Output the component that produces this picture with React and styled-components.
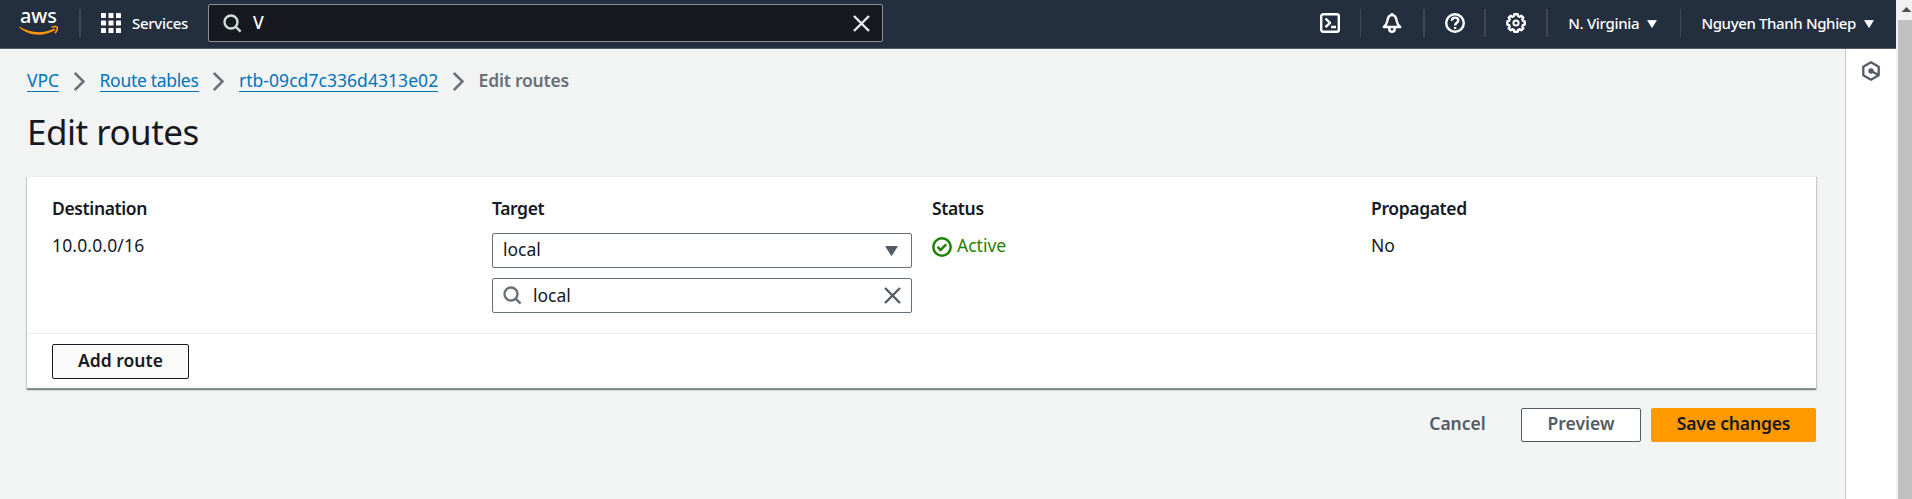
import React from "react";
import styled, { createGlobalStyle } from "styled-components";

const GlobalStyle = createGlobalStyle`
  * { box-sizing: border-box; }
  body {
    margin: 0;
    overflow: hidden;
    background: #f2f3f3;
    color: #16191f;
    font-family: "Noto Sans", sans-serif;
    font-size: 17.5px;
    line-height: 27px;
  }
  svg { display: block; flex: none; }
`;

const Screen = styled.div`
  display: flex;
  height: 499px;
`;

const Console = styled.div`
  flex: 1;
  min-width: 0;
  display: flex;
  flex-direction: column;
`;

/* ---------- top navigation ---------- */

const TopBar = styled.header`
  display: flex;
  align-items: flex-start;
  height: 49px;
  padding: 0 22px 0 19px;
  background: #232f3e;
  border-bottom: 1px solid #545b64;
  color: #fff;
  font-size: 15px;
  font-weight: 500;
  white-space: nowrap;
`;

const Logo = styled.div`
  width: 60px;
`;

const Separator = styled.i`
  width: ${(p) => p.$thickness || 2}px;
  height: 28px;
  margin-top: 9px;
  background: #414750;
`;

const ServicesButton = styled.div`
  display: flex;
  align-items: center;
  gap: 11px;
  width: 127px;
  height: 46px;
  padding-left: 20px;
  letter-spacing: -0.3px;

  span { padding-top: 1px; }
`;

const SearchBox = styled.div`
  display: flex;
  align-items: center;
  width: 675px;
  height: 38px;
  margin-top: 4px;
  padding: 0 12px 0 14px;
  background: #16191f;
  border: 1px solid #879596;
  border-radius: 2px;
  font-size: 17.5px;

  span { flex: 1; margin-left: 11px; padding-bottom: 1px; }
`;

const Tools = styled.div`
  display: flex;
  margin-left: auto;
`;

const Tool = styled.div`
  display: flex;
  justify-content: center;
  align-items: center;
  width: ${(p) => p.$width}px;
  height: 46px;
`;

const Menu = styled.div`
  display: flex;
  align-items: center;
  gap: ${(p) => p.$gap}px;
  height: 46px;
  padding: 1px ${(p) => p.$after || 0}px 0 20px;
  letter-spacing: ${(p) => p.$tracking}px;
`;

/* ---------- page ---------- */

const Body = styled.div`
  flex: 1;
  display: flex;
`;

const Main = styled.main`
  flex: 1;
  padding: 18px 29px 0 27px;
`;

const SidePanel = styled.aside`
  display: flex;
  justify-content: center;
  width: 51px;
  padding-top: 12px;
  background: #fff;
  border-left: 1px solid #c3c8c9;
`;

const Breadcrumbs = styled.nav`
  display: flex;
  align-items: flex-start;
  height: 27px;
  gap: 14.7px;

  svg { margin-top: 5px; }
`;

const Crumb = styled.a`
  height: 25px;
  color: #0073bb;
  border-bottom: 1px solid #0073bb;
  letter-spacing: ${(p) => p.$tracking || 0}px;
`;

const CurrentCrumb = styled.span`
  color: #687078;
  font-weight: 600;
  letter-spacing: -0.2px;
`;

const Title = styled.h1`
  margin: 15px 0 22px;
  font-size: 35px;
  font-weight: 400;
  line-height: 45px;
  letter-spacing: -0.52px;
`;

const Card = styled.section`
  background: #fff;
  height: 213px;
  border-top: 1px solid #eaeded;
  box-shadow: 0 1px 1px rgba(0, 28, 36, 0.3), 1px 1px 1px rgba(0, 28, 36, 0.15),
    -1px 1px 1px rgba(0, 28, 36, 0.15);
  border-bottom: 1px solid #879596;
`;

const Routes = styled.div`
  display: grid;
  grid-template-columns: 440px 440px 439px 1fr;
  height: 157px;
  padding: 18px 0 0 25px;
  border-bottom: 1px solid #eaeded;
`;

const Column = styled.div`
  display: flex;
  flex-direction: column;
  align-items: flex-start;
`;

const Label = styled.div`
  margin-bottom: 10px;
  font-weight: 600;
  letter-spacing: -0.37px;
`;

const Value = styled.div`
  display: flex;
  gap: 5px;
  color: ${(p) => (p.$success ? "#1d8102" : "inherit")};
  letter-spacing: ${(p) => p.$tracking || 0}px;

  svg { margin-top: 5px; }
`;

const Field = styled.div`
  display: flex;
  align-items: center;
  width: 420px;
  height: 35px;
  margin: 1px 0 9px;
  padding: 0 ${(p) => (p.$select ? 13 : 10)}px 0 10px;
  background: #fff;
  border: 1px solid #687078;
  border-radius: 2px;

  span { flex: 1; padding-bottom: ${(p) => (p.$select ? 2 : 0)}px; }
  svg + span { margin-left: 11px; }
`;

const CardFooter = styled.div`
  padding: 10px 25px;
`;

const Button = styled.button`
  display: inline-flex;
  justify-content: center;
  align-items: center;
  width: ${(p) => p.$width}px;
  height: ${(p) => p.$height || 34}px;
  padding: 0 0 3px;
  border: 1px solid ${(p) => p.$border || "transparent"};
  border-radius: 2px;
  background: ${(p) => p.$fill || "transparent"};
  color: ${(p) => p.$color || "#16191f"};
  font: 600 17.5px/27px "Noto Sans", sans-serif;
  letter-spacing: ${(p) => p.$tracking || 0}px;
`;

const Actions = styled.div`
  display: flex;
  justify-content: flex-end;
  gap: 10px;
  margin-top: 19px;
`;

/* ---------- scrollbar ---------- */

const Scrollbar = styled.div`
  width: 16px;
  padding: 7px 0 0 2px;
  background: #f1f1f1;
`;

const Thumb = styled.div`
  height: 479px;
  margin-top: 8px;
  background: #c1c1c1;
`;

/* ---------- drawings ---------- */

const AwsLogo = () => (
  <svg width="40" height="40" viewBox="0 -7 40 40">
    <text x="1" y="15.8" fill="#fff" fontFamily="Noto Sans, sans-serif" fontSize="20.5" fontWeight="500" textLength="37" lengthAdjust="spacingAndGlyphs">aws</text>
    <path d="M.3 19.5c10.800 6.800 23.700 7.600 35.200 2.100l.8 1.400C24.500 30.200 9.500 29.200.1 20.300Z" fill="#f90" />
    <path d="M32.500 20.200c2.200-.7 4.600-.9 5.800-.1.2 2.100-.5 4.400-2.300 6" fill="none" stroke="#f90" strokeWidth="1.500" />
  </svg>
);

const GridIcon = () => (
  <svg width="20" height="20" fill="#fff">
    {[0, 7.5, 15].map((y) => [0, 7.5, 15].map((x) => <rect key={`${x}-${y}`} x={x} y={y} width="5" height="5" rx="0.6" />))}
  </svg>
);

const SearchIcon = ({ color }) => (
  <svg width="19" height="19" viewBox="0 0 19 19" fill="none" stroke={color} strokeWidth="2.400">
    <circle cx="8" cy="8" r="6.500" />
    <path d="m12.600 12.600 5 5" />
  </svg>
);

const CloseIcon = ({ color }) => (
  <svg width="17" height="17" viewBox="0 0 17 17" stroke={color} strokeWidth="2.400">
    <path d="m1 1 15 15M16 1 1 16" />
  </svg>
);

const Triangle = ({ width, height, color }) => (
  <svg width={width} height={height} viewBox="0 0 13 10">
    <path d="M.8.500h11.400L6.500 9.500Z" fill={color} stroke={color} strokeLinejoin="round" />
  </svg>
);

const Chevron = () => (
  <svg width="11" height="19" viewBox="0 0 11 19" fill="none" stroke="#687078" strokeWidth="2.600">
    <path d="m.8 1 8.700 8.500L.8 18" />
  </svg>
);

const toolStroke = { fill: "none", stroke: "#fff", strokeWidth: 2.4, strokeLinejoin: "round" };

const TerminalIcon = () => (
  <svg width="20" height="20" {...toolStroke}>
    <rect x="1.200" y="1.200" width="17.600" height="17.600" rx="2" />
    <path d="m5.500 5.500 4.500 4.300-4.500 4.400M11 14h5" />
  </svg>
);

const BellIcon = () => (
  <svg width="20" height="20" {...toolStroke}>
    <path d="M1.800 14h16.400c-2.300-1.800-3-3.300-3.500-6C14.200 4.700 13 2 10 2S5.800 4.700 5.300 8c-.5 2.700-1.200 4.200-3.500 6ZM10 2V0M7.300 14.500v1.700c0 1.500 1.100 2.600 2.700 2.600s2.700-1.100 2.700-2.600v-1.700" />
  </svg>
);

const HelpIcon = () => (
  <svg width="20" height="20" {...toolStroke}>
    <circle cx="10" cy="10" r="8.800" />
    <path d="M6.900 7.700c0-1.900 1.200-3.100 3.200-3.100s3.200 1.100 3.200 2.800c0 2.300-3.200 2.400-3.200 5M10.100 13.900v2" />
  </svg>
);

const GearIcon = () => (
  <svg width="20" height="20" {...toolStroke}>
    <path d="M8.300 1.300h3.400l.5 1.900 1.500.6 1.700-1 1.900 1.900-1 1.700.6 1.500 1.800.5v3.200l-1.800.5-.6 1.500 1 1.700-1.900 1.900-1.700-1-1.500.6-.5 1.900H8.300l-.5-1.900-1.500-.6-1.700 1-1.900-1.900 1-1.700-.6-1.500-1.800-.5V8.400l1.800-.5.600-1.500-1-1.700 1.900-1.900 1.700 1 1.500-.6Z" />
    <circle cx="10" cy="10" r="2.600" strokeWidth="2" />
  </svg>
);

const CheckIcon = () => (
  <svg width="20" height="20" fill="none" stroke="#1d8102" strokeWidth="2.500">
    <circle cx="10" cy="10" r="8.700" />
    <path d="m5.600 9.800 3 3.200 5.600-5.600" />
  </svg>
);

const HexagonIcon = () => (
  <svg width="18" height="20" fill="none" stroke="#545b64" strokeWidth="2.300" strokeLinejoin="round">
    <path d="m9 1.300 7.700 4.400v8.600L9 18.700l-7.700-4.400V5.700Z" />
    <path d="m9 10 7.500 4" />
    <circle cx="9" cy="10" r="2.700" fill="#545b64" stroke="none" />
  </svg>
);

const ScrollArrow = () => (
  <svg width="14" height="5" viewBox="0 0 14 5">
    <path d="M3.500 5h10L8.500 0Z" fill="#505050" />
  </svg>
);

export default function App() {
  return (
    <Screen>
      <GlobalStyle />
      <Console>
        <TopBar>
          <Logo><AwsLogo /></Logo>
          <Separator />
          <ServicesButton><GridIcon /><span>Services</span></ServicesButton>
          <SearchBox>
            <SearchIcon color="#d5dbdb" />
            <span>V</span>
            <CloseIcon color="#eaeded" />
          </SearchBox>
          <Tools>
            <Tool $width={60}><TerminalIcon /></Tool>
            <Separator $thickness={1} />
            <Tool $width={62}><BellIcon /></Tool>
            <Separator />
            <Tool $width={59}><HelpIcon /></Tool>
            <Separator />
            <Tool $width={60}><GearIcon /></Tool>
            <Separator />
            <Menu $gap={8} $after={23} $tracking={-0.3}>N. Virginia<Triangle width="10" height="8" color="#fff" /></Menu>
            <Separator $thickness={1} />
            <Menu $gap={8} $tracking={-0.37}>Nguyen Thanh Nghiep<Triangle width="10" height="8" color="#fff" /></Menu>
          </Tools>
        </TopBar>
        <Body>
          <Main>
            <Breadcrumbs>
              <Crumb>VPC</Crumb>
              <Chevron />
              <Crumb $tracking={-0.31}>Route tables</Crumb>
              <Chevron />
              <Crumb $tracking={0.05}>rtb-09cd7c336d4313e02</Crumb>
              <Chevron />
              <CurrentCrumb>Edit routes</CurrentCrumb>
            </Breadcrumbs>
            <Title>Edit routes</Title>
            <Card>
              <Routes>
                <Column>
                  <Label>Destination</Label>
                  <Value $tracking={0.15}>10.0.0.0/16</Value>
                </Column>
                <Column>
                  <Label>Target</Label>
                  <Field $select><span>local</span><Triangle width="13" height="10" color="#545b64" /></Field>
                  <Field><SearchIcon color="#687078" /><span>local</span><CloseIcon color="#545b64" /></Field>
                </Column>
                <Column>
                  <Label>Status</Label>
                  <Value $success><CheckIcon />Active</Value>
                </Column>
                <Column>
                  <Label>Propagated</Label>
                  <Value>No</Value>
                </Column>
              </Routes>
              <CardFooter>
                <Button $width={137} $height={35} $border="#16191f" $fill="#fafafa">Add route</Button>
              </CardFooter>
            </Card>
            <Actions>
              <Button $width={107} $color="#545b64">Cancel</Button>
              <Button $width={120} $border="#545b64" $fill="#fff" $color="#545b64">Preview</Button>
              <Button $width={165} $fill="#ff9900" $border="#ff9900" $tracking={-0.15}>Save changes</Button>
            </Actions>
          </Main>
          <SidePanel><HexagonIcon /></SidePanel>
        </Body>
      </Console>
      <Scrollbar>
        <ScrollArrow />
        <Thumb />
      </Scrollbar>
    </Screen>
  );
}
